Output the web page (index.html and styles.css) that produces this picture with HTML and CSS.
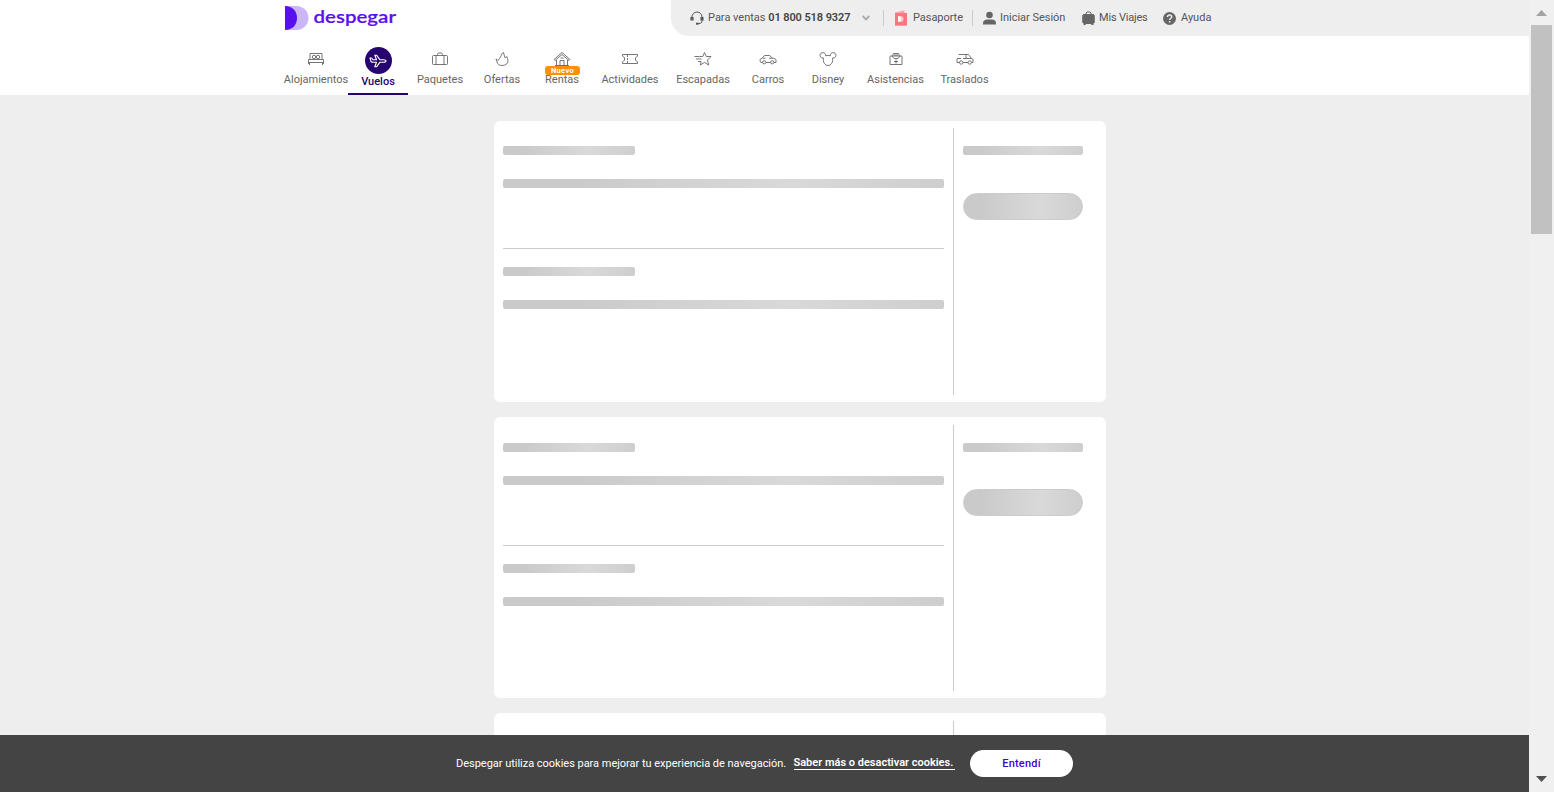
FILE: index.html
```html
<!DOCTYPE html>
<html lang="es">
<head>
<meta charset="utf-8">
<title>Despegar</title>
<link rel="stylesheet" href="styles.css">
</head>
<body>
<div class="page">
  <header class="header">
    <div class="topbar">
      <a class="logo" aria-label="despegar">
        <svg width="114" height="28" viewBox="0 0 114 28">
          <path d="M0 2h11.5a12 12 0 0 1 0 24H0z" fill="#ccb6fa"/>
          <path d="M0 2c7.500 0 12 5 12 12S7.500 26 0 26z" fill="#5a10ec"/>
          <text class="logo-text" x="28.500" y="19.300" textLength="82.500" lengthAdjust="spacingAndGlyphs">despegar</text>
        </svg>
      </a>
      <div class="user-menu">
        <a class="user-item sales">
          <svg width="14" height="14" viewBox="0 0 14 14" fill="none" stroke="#555"><path d="M2 7V6a5 5 0 0 1 10 0v4c0 1.500-1 2.500-3 2.500H7"/><path d="M1.200 6v3.500M2.800 6v3.500M11.200 6v3.500M12.800 6v3.500" stroke-width="1.500"/><path d="M6 12.700h2.500" stroke-width="2"/></svg>
          <span class="t-sales">Para ventas <b>01 800 518 9327</b></span>
          <svg class="chevron" width="8" height="6" viewBox="0 0 8 6" fill="none" stroke="#aaa" stroke-width="1.800"><path d="M.7 1 4 4.400 7.300 1"/></svg>
        </a>
        <a class="user-item passport">
          <svg width="13" height="16" viewBox="0 0 13 16"><path d="M1 2.500 10.500.3V3H13v12.500H1z" fill="#ffa5ac"/><path d="M1 3h12v12.500H1z" fill="#ff747f"/><path d="M4 6h2.500a3 3 0 0 1 0 6H4z" fill="#ffc5ca"/><path d="M4 6c4 .5 4 5.500 0 6z" fill="#fff"/></svg>
          <span class="t-pass">Pasaporte</span>
        </a>
        <a class="user-item login">
          <svg width="13" height="14" viewBox="0 0 13 14" fill="#666"><circle cx="6.500" cy="4" r="3.300"/><path d="M0 13.500v-1.300C0 9.800 2 8.500 4 8.500h5c2 0 4 1.300 4 3.700v1.300z"/></svg>
          <span class="t-login">Iniciar Sesión</span>
        </a>
        <a class="user-item trips">
          <svg width="13" height="15" viewBox="0 0 13 15"><path d="M4 4V2l1-1h3l1 1v2" fill="none" stroke="#666"/><path d="M1.500 3h10L12.800 4.500v7l-1.300 1v1.500H9.300V13H3.700v1H1.500v-1.500l-1.300-1v-7z" fill="#666"/></svg>
          <span class="t-trips">Mis Viajes</span>
        </a>
        <a class="user-item help">
          <svg width="13" height="13" viewBox="0 0 13 13"><circle cx="6.500" cy="6.500" r="6.500" fill="#666"/><path d="M4.500 5c0-2.700 4.200-2.500 4.200-.2 0 1.500-2 1.400-2 3.200" fill="none" stroke="#eee" stroke-width="1.500"/><path d="M5.900 9h1.500v1.500H5.900z" fill="#eee"/></svg>
          <span class="t-help">Ayuda</span>
        </a>
      </div>
    </div>
    <nav class="products">
      <a class="product w64"><svg class="icon" viewBox="0 0 18 16"><path d="M3 8V2.500h12V8M1.500 8.500h15v4.500M1.500 8.500V13M1.500 11.500h15M2.500 14v-2M15.500 14v-2"/><circle cx="7" cy="6" r="1.700"/><circle cx="11" cy="6" r="1.700"/></svg><span class="label">Alojamientos</span></a>
      <a class="product active w60"><span class="disc"><svg class="icon" viewBox="0 0 18 16"><path d="M1 5h1.600l1.600 1.800h3.300L5.800 2.200h1.700L11 6.800h3.500q2.500 0 2.500 1.200t-2.500 1.200H11l-3.500 4.600H5.800l1.700-4.600H4Q1.500 9.200 1.800 7.500z"/></svg></span><span class="label">Vuelos</span></a>
      <a class="product w64"><svg class="icon" viewBox="0 0 18 16"><path d="M2.500 4.500h13q1 0 1 1v7q0 1-1 1h-13q-1 0-1-1v-7q0-1 1-1zM5 4.500v9M13 4.500v9M6.500 4.500v-1q0-1.500 1.500-1.500h2q1.500 0 1.500 1.500v1"/></svg><span class="label">Paquetes</span></a>
      <a class="product w60"><svg class="icon" viewBox="0 0 18 16"><path d="M10.500 1.500C8 2 8.500 5.500 6.500 7.500L5 9.500 4 8.500 3 8l.5 1.500L4 11c.5 2.500 2.500 3.500 5 3.500 4 0 6-2 6-5 0-1.800-.8-2.500-1.300-4L12.500 7 11.700 6z"/></svg><span class="label">Ofertas</span></a>
      <a class="product w60"><svg class="icon" viewBox="0 0 18 16"><path d="m1 8.500 8-7 8 7-1 1-7-6-7 6zM3.500 9v6h11V9M7 15v-5.500h4V15M2 14.500h14M7.500 7h3"/></svg><span class="badge">Nuevo</span><span class="label">Rentas</span></a>
      <a class="product w76"><svg class="icon" viewBox="0 0 18 16"><path d="M1.500 3.500h15v1.700l-2 1.500v2.600l2 1.500v1.700h-15v-1.700l2-1.500V6.700l-2-1.500z"/><path d="M6.500 4v8" stroke-dasharray="2 1"/></svg><span class="label">Actividades</span></a>
      <a class="product w70"><svg class="icon" viewBox="0 0 18 16"><path d="M5.500 5.500h3.300L10.500 1.500l1.800 4h4.700l-3.500 3.500 1.200 5-4.200-2.600L6.300 14l.9-3.500M.5 5.500h5M2 8h5.500M4 10.500h3"/></svg><span class="label">Escapadas</span></a>
      <a class="product w60"><svg class="icon" viewBox="0 0 18 16"><path d="M3.500 11.500H1.800Q1 10.500 1 8.500l2-1.300L5.500 4.500h5.200l2.800 2.700c2 .3 3.500.8 3.500 2v2.300h-2M7 11.500h4.500M3.500 7.200h3M10 7.200h3.500"/><circle cx="5.200" cy="11.300" r="1.600"/><circle cx="13.200" cy="11.300" r="1.600"/></svg><span class="label">Carros</span></a>
      <a class="product w60"><svg class="icon" viewBox="0 0 18 16"><path d="M4.500 7C.5 7.500 0 2.500 3 1.800 5.500 1.200 7 3 6.500 4.800q2.500-1 5 0C11 3 12.500 1.200 15 1.800c3 .7 2.500 5.700-1.500 5.200 1 4-1.500 7.500-4.500 7.500S3.500 11 4.500 7z"/></svg><span class="label">Disney</span></a>
      <a class="product w75"><svg class="icon" viewBox="0 0 18 16"><path d="M3.500 5h11q.5 0 .5.500v8H3v-8q0-.5.500-.5zM5.500 5l1-2.500h5l1 2.500M5 5l2 2.500h4L13 5M9 8.500v4M7 10.500h4M7 4h4"/></svg><span class="label">Asistencias</span></a>
      <a class="product w63"><svg class="icon" viewBox="0 0 18 16"><path d="M2.500 3.500h10l3 4 1.500.8v3.200h-1.500M1 8v3.500h2.500M7 11.500h5M7 7.500h8.500M10 3.500v4M1 7.500h4"/><circle cx="5.200" cy="11.500" r="1.700"/><circle cx="13.700" cy="11.500" r="1.700"/></svg><span class="label">Traslados</span></a>
    </nav>
  </header>

  <main class="results">
    <section class="card">
      <div class="routes">
        <div class="route"><div class="bar short"></div><div class="bar long"></div></div>
        <div class="route second"><div class="bar short"></div><div class="bar long"></div></div>
      </div>
      <div class="fare"><div class="bar"></div><div class="pill"></div></div>
    </section>
    <section class="card">
      <div class="routes">
        <div class="route"><div class="bar short"></div><div class="bar long"></div></div>
        <div class="route second"><div class="bar short"></div><div class="bar long"></div></div>
      </div>
      <div class="fare"><div class="bar"></div><div class="pill"></div></div>
    </section>
    <section class="card">
      <div class="routes">
        <div class="route"><div class="bar short"></div><div class="bar long"></div></div>
      </div>
      <div class="fare"><div class="bar"></div><div class="pill"></div></div>
    </section>
  </main>

  <footer class="cookies">
    <span class="cookie-text">Despegar utiliza cookies para mejorar tu experiencia de navegación.</span>
    <a class="cookie-link">Saber más o desactivar cookies.</a>
    <button class="accept">Entendí</button>
  </footer>
</div>
<aside class="scrollbar">
  <svg class="arrow" width="11" height="6" viewBox="0 0 11 6"><path d="M0 6 5.500 0 11 6z" fill="#a3a3a3"/></svg>
  <div class="thumb"></div>
  <svg class="arrow down" width="11" height="6" viewBox="0 0 11 6"><path d="M0 0h11L5.500 6z" fill="#505050"/></svg>
</aside>
</body>
</html>
```
FILE: styles.css
```css
* { box-sizing: border-box; }
body {
  margin: 0;
  display: flex;
  height: 792px;
  overflow: hidden;
  font: 11px/14px Roboto, "Liberation Sans", sans-serif;
  color: #555;
}
.page {
  width: 1529px;
  height: 792px;
  display: flex;
  flex-direction: column;
  background: #eee;
}
.header { height: 95px; background: #fff; flex: none; }
.topbar {
  display: flex;
  justify-content: space-between;
  height: 36px;
  padding-left: 285px;
}
.logo { padding-top: 4px; }
.logo svg { display: block; }
.logo-text { font: 600 18px Lato, sans-serif; fill: #5a10ec; stroke: #5a10ec; stroke-width: .2; }
.user-menu {
  display: flex;
  align-items: center;
  width: 858px;
  height: 36px;
  padding-left: 19px;
  background: #eee;
  border-bottom-left-radius: 18px;
}
.user-item { display: flex; align-items: center; height: 16px; white-space: nowrap; }
.user-item svg { flex: none; }
.user-item b { font-weight: 600; color: #444; letter-spacing: -.1px; }
.sales { width: 194px; border-right: 1px solid #ccc; gap: 4px; }
.sales .chevron { margin-left: 6px; }
.passport { width: 89px; padding-left: 10px; gap: 6px; border-right: 1px solid #ccc; }
.login { width: 109px; padding-left: 10px; gap: 4px; }
.trips { width: 81px; gap: 4px; }
.help { gap: 5px; }
.t-sales { width: 144px; }
.t-pass { letter-spacing: -.05px; }
.t-login { letter-spacing: -.02px; }
.t-trips { letter-spacing: -.2px; }

.products { display: flex; height: 59px; padding-left: 284px; }
.product {
  position: relative;
  display: flex;
  flex-direction: column;
  align-items: center;
  height: 59px;
  padding-top: 15px;
  color: #666;
  white-space: nowrap;
}
.w60 { width: 60px; }
.w63 { width: 63px; }
.w64 { width: 64px; }
.w70 { width: 70px; }
.w75 { width: 75px; }
.w76 { width: 76px; }
.icon {
  width: 18px;
  height: 16px;
  fill: none;
  stroke: #666;
  stroke-width: .9;
  stroke-linejoin: round;
}
.label { margin-top: 6px; }
.active { padding-top: 11px; color: #270570; border-bottom: 2px solid #270570; font-weight: 500; }
.disc {
  display: flex;
  align-items: center;
  justify-content: center;
  width: 27px;
  height: 27px;
  border-radius: 50%;
  background: #270570;
}
.disc .icon { stroke: #fff; stroke-width: 1.1; }
.active .label { margin-top: 1px; }
.badge {
  position: absolute;
  top: 30px;
  left: 13px;
  width: 35px;
  height: 9px;
  border-radius: 3px;
  background: #ff9100;
  color: #fff;
  font-size: 7.500px;
  line-height: 9px;
  font-weight: 700;
  letter-spacing: .3px;
  text-align: center;
}

.results {
  display: flex;
  flex-direction: column;
  align-items: center;
  gap: 15px;
  height: 640px;
  padding: 26px 0 0 71px;
  overflow: hidden;
}
.card {
  display: flex;
  flex: none;
  width: 612px;
  height: 281.2px;
  padding: 7.4px 9px 7px;
  border-radius: 6px;
  background: #fff;
}
.routes { width: 451px; padding-right: 9px; border-right: 1px solid #ccc; }
.route { height: 120px; padding-top: 18px; }
.second { border-top: 1px solid #ccc; height: 121px; }
.route .bar + .bar { margin-top: 24px; }
.bar {
  height: 9px;
  border-radius: 2px;
  background: linear-gradient(90deg, #cacaca 15%, #d9d9d9 65%, #cecece);
}
.short { width: 132px; }
.fare { width: 129px; padding: 18px 0 0 9px; }
.pill {
  height: 27px;
  margin-top: 37.800px;
  border: 1px solid #ccc;
  border-radius: 14px;
  background: linear-gradient(90deg, #cacaca 15%, #d9d9d9 65%, #cecece);
}

.cookies {
  display: flex;
  align-items: center;
  flex: none;
  height: 57px;
  padding-left: 456px;
  background: #444;
  color: #fff;
  white-space: nowrap;
}
.cookie-text { width: 337.500px; letter-spacing: -.02px; }
.cookie-link {
  width: 161px;
  margin-right: 15.500px;
  font-weight: 600;
  line-height: 12px;
  border-bottom: 1px solid #fff;
}
.accept {
  width: 103px;
  height: 27px;
  padding: 0;
  border: 0;
  border-radius: 14px;
  background: #fff;
  color: #4300d2;
  font: 500 11px/14px Roboto, sans-serif;
  letter-spacing: .2px;
}
.scrollbar {
  display: flex;
  flex-direction: column;
  align-items: center;
  width: 25px;
  height: 792px;
  padding: 10px 0;
  background: #f0f0f0;
}
.arrow { display: block; flex: none; }
.thumb { width: 21px; height: 209px; margin-top: 9px; background: #c1c1c1; }
.down { margin-top: auto; }
```
